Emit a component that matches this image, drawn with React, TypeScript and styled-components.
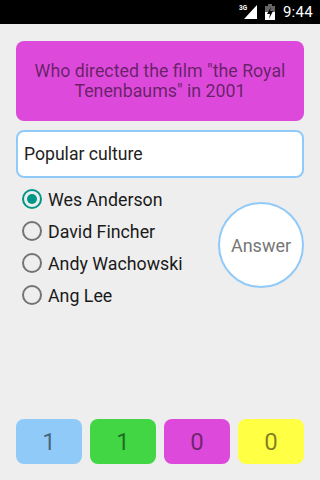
import * as React from 'react';
import styled, { createGlobalStyle } from 'styled-components';

const GlobalStyle = createGlobalStyle`
    html, body {
        margin: 0;
        padding: 0;
        background: #eeeeee;
    }
    body {
        font-family: Roboto, "Noto Sans", sans-serif;
    }
`;

const Screen = styled.div`
    width: 320px;
    height: 480px;
    display: flex;
    flex-direction: column;
    background: #eeeeee;
    overflow: hidden;
`;

const StatusBar = styled.div`
    height: 24px;
    background: #000;
    display: flex;
    align-items: center;
    justify-content: flex-end;
    padding-right: 7px;
    gap: 7px;
    color: #fff;
`;

const Clock = styled.span`
    font-size: 15px;
    letter-spacing: 0.3px;
    margin-left: 1px;
`;

const Body = styled.div`
    flex: 1;
    display: flex;
    flex-direction: column;
    padding: 17px 16px 16px;
`;

const QuestionCard = styled.div`
    height: 80px;
    border-radius: 8px;
    background: #dd4adb;
    display: flex;
    align-items: center;
    justify-content: center;
    text-align: center;
    padding: 0 10px;
    color: rgba(0, 0, 0, 0.55);
    font-size: 17.8px;
    line-height: 20px;
`;

const CategoryField = styled.div`
    margin-top: 9px;
    height: 48px;
    box-sizing: border-box;
    border: 2px solid #90caf9;
    border-radius: 8px;
    background: #fff;
    display: flex;
    align-items: center;
    padding-left: 6px;
    font-size: 17.6px;
    color: #222;
`;

const AnswerArea = styled.div`
    margin-top: 5px;
    display: flex;
    align-items: center;
    justify-content: space-between;
`;

const Choices = styled.div`
    display: flex;
    flex-direction: column;
`;

const ChoiceRow = styled.label`
    height: 32px;
    display: flex;
    align-items: center;
    gap: 6px;
    padding-left: 6px;
    font-size: 17.8px;
    color: #1a1a1a;
`;

const Radio = styled.span<{ $checked: boolean }>`
    width: 20px;
    height: 20px;
    box-sizing: border-box;
    border-radius: 50%;
    border: 2px solid ${p => (p.$checked ? '#009688' : '#737373')};
    display: flex;
    align-items: center;
    justify-content: center;

    &::after {
        content: '';
        width: 10px;
        height: 10px;
        border-radius: 50%;
        background: #009688;
        display: ${p => (p.$checked ? 'block' : 'none')};
    }
`;

const AnswerButton = styled.button`
    width: 86px;
    height: 86px;
    box-sizing: border-box;
    border-radius: 50%;
    border: 2px solid #90caf9;
    background: #fff;
    color: #777;
    font-family: inherit;
    font-size: 18px;
    padding: 0;
    margin-top: -4px;
`;

const Scores = styled.div`
    margin-top: auto;
    display: grid;
    grid-template-columns: repeat(4, 1fr);
    gap: 8px;
`;

const ScoreTile = styled.div<{ $color: string }>`
    height: 45px;
    border-radius: 8px;
    background: ${p => p.$color};
    display: flex;
    align-items: center;
    justify-content: center;
    font-size: 24px;
    color: rgba(0, 0, 0, 0.5);
`;

const choices = ['Wes Anderson', 'David Fincher', 'Andy Wachowski', 'Ang Lee'];

const scores = [
    { value: 1, color: '#90caf9' },
    { value: 1, color: '#42d544' },
    { value: 0, color: '#dd4adb' },
    { value: 0, color: '#ffff44' }
];

const SignalIcon = () => (
    <svg width="19" height="16" viewBox="0 0 19 16">
        <text x="0" y="6" fontSize="6.5" fontFamily="Roboto, sans-serif" fontWeight="bold" fill="#fff">3G</text>
        <polygon points="18,1 18,15 5,15" fill="#fff" />
    </svg>
);

const BatteryIcon = () => (
    <svg width="10" height="16" viewBox="0 0 10 16">
        <rect x="3" y="0" width="4" height="2" fill="#666" />
        <rect x="0" y="2" width="10" height="6" fill="#666" />
        <rect x="0" y="8" width="10" height="8" fill="#fff" />
        <polygon points="6,3 2,10 5,10 4,15 8,7 5,7" fill="#000" />
    </svg>
);

export default function App() {
    return (
        <Screen>
            <GlobalStyle />
            <StatusBar>
                <SignalIcon />
                <BatteryIcon />
                <Clock>9:44</Clock>
            </StatusBar>
            <Body>
                <QuestionCard>
                    Who directed the film "the Royal Tenenbaums" in 2001
                </QuestionCard>
                <CategoryField>Popular culture</CategoryField>
                <AnswerArea>
                    <Choices>
                        {choices.map((c, i) => (
                            <ChoiceRow key={c}>
                                <Radio $checked={i === 0} />
                                {c}
                            </ChoiceRow>
                        ))}
                    </Choices>
                    <AnswerButton>Answer</AnswerButton>
                </AnswerArea>
                <Scores>
                    {scores.map((s, i) => (
                        <ScoreTile key={i} $color={s.color}>{s.value}</ScoreTile>
                    ))}
                </Scores>
            </Body>
        </Screen>
    );
}
